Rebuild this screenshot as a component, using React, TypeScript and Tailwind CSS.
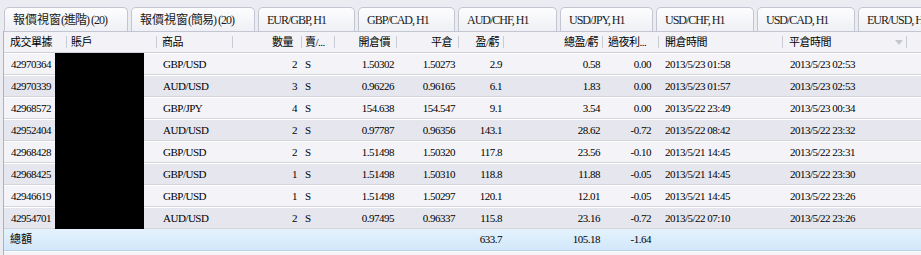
import React from "react";

type Row = {
  id: string;
  sym: string;
  qty: string;
  side: string;
  open: string;
  close: string;
  pl: string;
  total: string;
  swap: string;
  openTime: string;
  closeTime: string;
};

const rows: Row[] = [
  { id: "42970364", sym: "GBP/USD", qty: "2", side: "S", open: "1.50302", close: "1.50273", pl: "2.9", total: "0.58", swap: "0.00", openTime: "2013/5/23 01:58", closeTime: "2013/5/23 02:53" },
  { id: "42970339", sym: "AUD/USD", qty: "3", side: "S", open: "0.96226", close: "0.96165", pl: "6.1", total: "1.83", swap: "0.00", openTime: "2013/5/23 01:57", closeTime: "2013/5/23 02:53" },
  { id: "42968572", sym: "GBP/JPY", qty: "4", side: "S", open: "154.638", close: "154.547", pl: "9.1", total: "3.54", swap: "0.00", openTime: "2013/5/22 23:49", closeTime: "2013/5/23 00:34" },
  { id: "42952404", sym: "AUD/USD", qty: "2", side: "S", open: "0.97787", close: "0.96356", pl: "143.1", total: "28.62", swap: "-0.72", openTime: "2013/5/22 08:42", closeTime: "2013/5/22 23:32" },
  { id: "42968428", sym: "GBP/USD", qty: "2", side: "S", open: "1.51498", close: "1.50320", pl: "117.8", total: "23.56", swap: "-0.10", openTime: "2013/5/21 14:45", closeTime: "2013/5/22 23:31" },
  { id: "42968425", sym: "GBP/USD", qty: "1", side: "S", open: "1.51498", close: "1.50310", pl: "118.8", total: "11.88", swap: "-0.05", openTime: "2013/5/21 14:45", closeTime: "2013/5/22 23:30" },
  { id: "42946619", sym: "GBP/USD", qty: "1", side: "S", open: "1.51498", close: "1.50297", pl: "120.1", total: "12.01", swap: "-0.05", openTime: "2013/5/21 14:45", closeTime: "2013/5/22 23:26" },
  { id: "42954701", sym: "AUD/USD", qty: "2", side: "S", open: "0.97495", close: "0.96337", pl: "115.8", total: "23.16", swap: "-0.72", openTime: "2013/5/22 07:10", closeTime: "2013/5/22 23:26" },
];

const tabs: { zh?: string; label: string; w: string }[] = [
  { zh: "報價視窗", label: "(進階) (20)", w: "w-[124px]" },
  { zh: "報價視窗", label: "(簡易) (20)", w: "w-[124px]" },
  { label: "EUR/GBP, H1", w: "w-[97px]" },
  { label: "GBP/CAD, H1", w: "w-[97px]" },
  { label: "AUD/CHF, H1", w: "w-[99px]" },
  { label: "USD/JPY, H1", w: "w-[93px]" },
  { label: "USD/CHF, H1", w: "w-[98px]" },
  { label: "USD/CAD, H1", w: "w-[98px]" },
  { label: "EUR/USD, H1", w: "w-[98px]" },
];

const grid =
  "grid grid-cols-[63px_90px_76px_69px_33px_62px_62px_45px_99px_56px_124px_124px_1fr]";

function Sep() {
  return <div className="h-[12px] w-px shrink-0 bg-[#c9cbd5]" />;
}

function Head({ text, right, pad }: { text: string; right?: boolean; pad: string }) {
  return (
    <div className="flex items-center overflow-hidden">
      <span className={`flex-1 truncate whitespace-nowrap ${right ? "text-right" : "text-left"} ${pad}`}>
        {text}
      </span>
      <Sep />
    </div>
  );
}

function Tabs() {
  return (
    <div className="flex h-[31px] items-end gap-[3px] overflow-hidden pl-[4px]">
      {tabs.map((t, i) => (
        <div
          key={i}
          className={`${t.w} flex h-[24px] shrink-0 items-center whitespace-nowrap rounded-t-[5px] border border-b-0 border-[#c3c6d1] bg-gradient-to-b from-[#fdfdfe] to-[#eef0f5] pl-[8px] text-[12px] tracking-[-1px] text-[#1a1a1a]`}
        >
          {t.zh && <span className="tracking-normal">{t.zh}</span>}
          <span>{t.label}</span>
        </div>
      ))}
    </div>
  );
}

export default function App() {
  return (
    <div className="h-[255px] w-[921px] overflow-hidden bg-[#ebecf2] font-[family-name:'Liberation_Serif','Noto_Sans_CJK_TC',serif] text-black">
      <Tabs />
      <div className="pl-[3px]">
        <div className="border-l border-[#aeb1bc] text-[11px] tracking-[-0.5px]">
          {/* header */}
          <div className={`${grid} h-[22px] border-y border-t-[#c3c6d0] border-b-[#cfd1da] bg-[#f3f3f7]`}>
            <Head text="成交單據" pad="pl-[6px]" />
            <Head text="賬戶" pad="pl-[4px]" />
            <Head text="商品" pad="pl-[5px]" />
            <Head text="數量" right pad="pr-[8px]" />
            <Head text="賣/..." pad="pl-[3px]" />
            <Head text="開倉價" right pad="pr-[6px]" />
            <Head text="平倉" right pad="pr-[6px]" />
            <Head text="盈/虧" right pad="pr-[4px]" />
            <Head text="總盈/虧" right pad="pr-[4px]" />
            <Head text="過夜利..." pad="pl-[5px]" />
            <Head text="開倉時間" pad="pl-[6px]" />
            <div className="flex items-center">
              <span className="flex-1 pl-[6px]">平倉時間</span>
              <svg width="8" height="5" viewBox="0 0 8 5" className="mr-[3px]">
                <path d="M0 0h8L4 5z" fill="#c4c6d0" />
              </svg>
              <Sep />
            </div>
            <div />
          </div>

          {/* body */}
          <div className="relative">
            {rows.map((r, i) => (
              <div
                key={r.id}
                className={`${grid} h-[22px] items-center border-t border-b border-t-white border-b-[#d3d5dd] ${
                  i % 2 === 0 ? "bg-[#f4f4f8]" : "bg-[#e6e7ee]"
                }`}
              >
                <div className="pl-[7px]">{r.id}</div>
                <div />
                <div className="pl-[6px]">{r.sym}</div>
                <div className="pr-[5px] text-right">{r.qty}</div>
                <div className="pl-[3px]">{r.side}</div>
                <div className="pr-[3px] text-right">{r.open}</div>
                <div className="pr-[4px] text-right">{r.close}</div>
                <div className="pr-[2px] text-right">{r.pl}</div>
                <div className="pr-[3px] text-right">{r.total}</div>
                <div className="pr-[8px] text-right">{r.swap}</div>
                <div className="pl-[6px]">{r.openTime}</div>
                <div className="pl-[7px]">{r.closeTime}</div>
                <div />
              </div>
            ))}
            {/* redaction block over account column */}
            <div className="absolute left-[51px] top-0 h-[176px] w-[89px] bg-black" />
          </div>

          {/* total */}
          <div className={`${grid} h-[22px] items-center border-b border-[#b9d3ea] bg-gradient-to-b from-[#e4f2fd] to-[#d2e8fa]`}>
            <div className="pl-[6px] tracking-normal">總額</div>
            <div />
            <div />
            <div />
            <div />
            <div />
            <div />
            <div className="pr-[2px] text-right">633.7</div>
            <div className="pr-[3px] text-right">105.18</div>
            <div className="pr-[8px] text-right">-1.64</div>
            <div />
            <div />
            <div />
          </div>
          <div className="h-[6px] border-t border-white bg-[#f4f4f8]" />
        </div>
      </div>
    </div>
  );
}
